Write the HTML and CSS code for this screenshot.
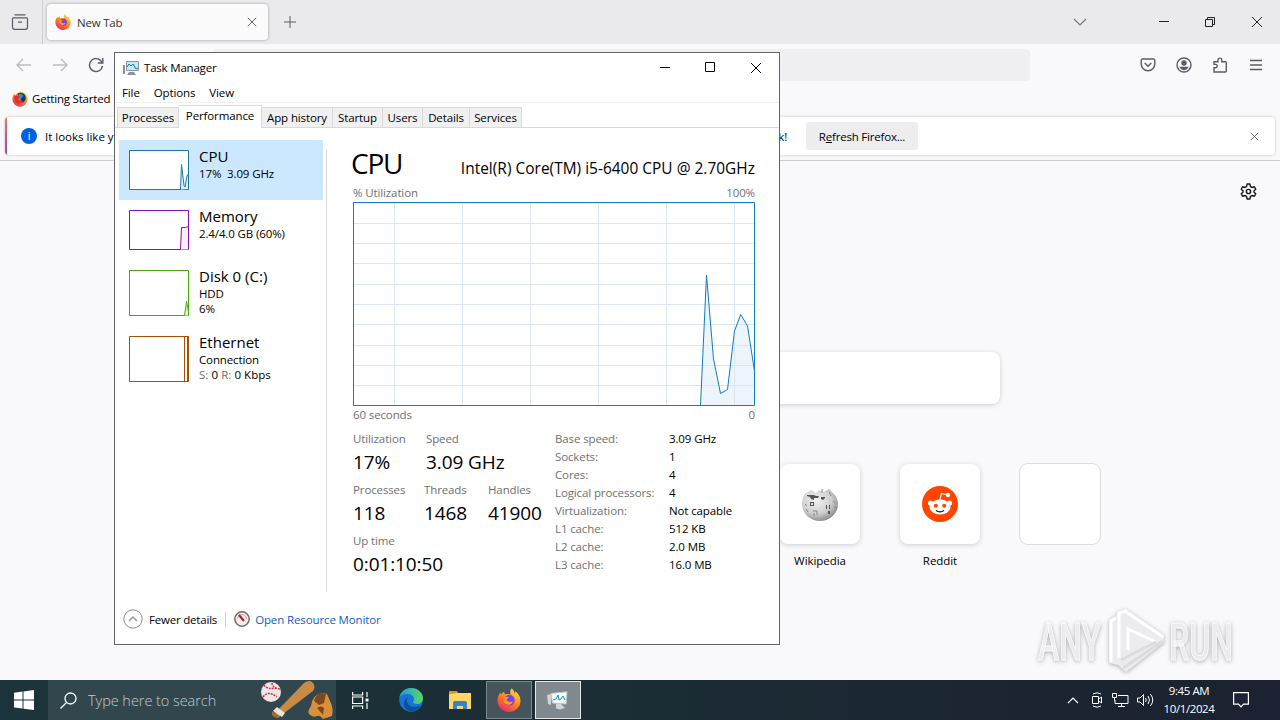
FILE: index.html
```
<!DOCTYPE html>
<html lang="en">

<head>
  <meta charset="UTF-8">
  <meta name="viewport" content="width=device-width, initial-scale=1.0">
  <title>Desktop</title>
  <link rel="stylesheet" href="styles.css">
</head>

<body>
  <!-- shared icons -->
  <svg class="defs" width="0" height="0">
    <defs>
      <linearGradient id="fx" x1=".8" y1="0" x2=".2" y2="1">
        <stop offset="0" stop-color="#ffe23a" />
        <stop offset=".45" stop-color="#ff8a1c" />
        <stop offset="1" stop-color="#f0206a" />
      </linearGradient>
      <linearGradient id="edge" x1="0" y1="0" x2="1" y2="0">
        <stop offset="0" stop-color="#1b9de0" />
        <stop offset="1" stop-color="#5ad860" />
      </linearGradient>
      <radialGradient id="globe" cx=".4" cy=".35" r=".7">
        <stop offset="0" stop-color="#f1f1f1" />
        <stop offset=".6" stop-color="#cfcfcf" />
        <stop offset="1" stop-color="#858585" />
      </radialGradient>
      <symbol id="firefox" viewBox="0 0 24 24">
        <path fill="url(#fx)" d="M14.5.5c2 1.5 2.7 3 3 4.4 1-.2 1-1.2.8-2 3.3 2.7 5.2 6 5.2 9.8A11.5 11.3 0 0 1 .5 12.8C.4 9.2 1.7 6.5 3.5 4.2c0 1 .2 1.6.6 2C5 5 6 4.2 7.3 3.7 7 5 7.6 5.8 8.4 6.2c2-.4 4-.2 5.4.6C12.8 4.5 13 2.2 14.5.5z" />
        <circle cx="12.3" cy="12.2" r="5.4" fill="#7542e5" />
        <path fill="#ff9a20" d="M6.5 9.5c2-1.3 4-1 5.7.4-1.8.2-2.7 1.2-2.7 2.4 1.4 1.7 4.3 1.9 6.3.6-.6 3.2-3.5 4.6-6 3.7-2.7-.9-4-3.9-3.3-7.1z" />
      </symbol>
      <symbol id="firefox-old" viewBox="0 0 24 24">
        <path fill="url(#fx)" d="M12 .8c6 0 11 4.5 11.3 10.5C23.6 18 18 23.5 12 23.5S.6 18.5.6 12.5c0-4 1.4-6.5 2.9-8.3l1 2L7.3 3.7z" />
        <path fill="#17356f" d="M8 4c4-3 10-1.5 12 3 1.5 4 0 9-4.5 10.5z" />
        <path fill="#2d8fd8" d="M10 4.5c3-1 6 .5 7 3l-4 5-4-4z" />
        <path fill="#e0321c" d="M3.5 8l4-1.5 4 2.5-2 3.5q3 4 7.5 2-2.5 5-7.5 4.5C4 18 2.5 13 3.5 8z" />
      </symbol>
      <symbol id="close" viewBox="0 0 12 12">
        <path fill="none" stroke="currentColor" d="M1 1l10 10M11 1L1 11" />
      </symbol>
    </defs>
  </svg>

  <div class="desktop">
    <div class="firefox">
      <div class="tabstrip">
        <div class="view">
          <svg width="18" height="16" viewBox="0 0 18 16" fill="none" stroke="#5b5b66" stroke-width="1.2"><path d="M3.5.8h11M2.5 3.8h13a1 1 0 0 1 1 1v8.5a2 2 0 0 1-2 2h-11a2 2 0 0 1-2-2V4.8a1 1 0 0 1 1-1zM7 8.200h4" /></svg>
        </div>
        <div class="tab">
          <svg class="tab__icon" width="16" height="16"><use href="#firefox" /></svg>
          <span class="tab__title">New Tab</span>
          <svg class="tab__close" width="10" height="10"><use href="#close" /></svg>
        </div>
        <svg class="plus" width="12" height="12" viewBox="0 0 12 12" stroke="#5b5b66"><path d="M6 0v12M0 6h12" /></svg>
        <div class="winbtns">
          <svg class="winbtns__list" width="14" height="8" viewBox="0 0 14 8" fill="none" stroke="#77777f" stroke-width="1.2"><path d="M1 1l6 6 6-6" /></svg>
          <svg width="10" height="10" viewBox="0 0 10 10" stroke="#222"><path d="M0 4.5h10" /></svg>
          <svg width="10" height="10" viewBox="0 0 10 10" fill="none" stroke="#222"><path d="M.5 2.5h7v7h-7zM2.5 2.5v-2h7v7h-2" /></svg>
          <svg width="12" height="12" color="#222"><use href="#close" /></svg>
        </div>
      </div>

      <div class="toolbar">
        <svg class="toolbar__arrow" width="16" height="14" viewBox="0 0 16 14"><path d="M15 7H1M7 1L1 7l6 6" /></svg>
        <svg class="toolbar__arrow" width="16" height="14" viewBox="0 0 16 14"><path d="M1 7h14M9 1l6 6-6 6" /></svg>
        <svg class="toolbar__reload" width="16" height="16" viewBox="0 0 16 16"><path d="M14.2 6.2A6.5 6.5 0 1 0 14.4 9M14.8 1v5h-5" /></svg>
        <div class="urlbar"></div>
        <div class="toolbar__right">
          <svg width="16" height="16" viewBox="0 0 16 16"><path d="M2.5 2h11a1.3 1.3 0 0 1 1.3 1.3V7a6.8 6.8 0 0 1-13.6 0V3.3A1.3 1.3 0 0 1 2.5 2zM4.7 6L8 9.2 11.3 6" /></svg>
          <svg width="16" height="16" viewBox="0 0 16 16"><circle cx="8" cy="8" r="7" /><circle cx="8" cy="6" r="2" fill="#5b5b66" /><path d="M4.5 10.5h7q-1 2-3.5 2t-3.5-2z" fill="#5b5b66" /></svg>
          <svg width="16" height="16" viewBox="0 0 16 16"><path d="M2 15V10.8h1.5a1.7 1.7 0 0 0 0-3.4H2V4.7h4V3a1.9 1.9 0 0 1 3.8 0v1.7h3.7a.8.8 0 0 1 .8.8V14a1 1 0 0 1-.8 1z" /></svg>
          <svg class="toolbar__menu" width="12" height="16" viewBox="0 0 12 16"><path d="M0 3.5h12M0 8h12M0 12.5h12" /></svg>
        </div>
      </div>

      <div class="bookmarks">
        <svg width="16" height="16"><use href="#firefox-old" /></svg>
        <span>Getting Started</span>
      </div>

      <div class="infobar">
        <div class="infobar__i">i</div>
        <span class="infobar__start">It looks like y</span>
        <span class="infobar__end">k!</span>
        <div class="infobar__btn"><span>R<u>e</u>fresh Firefox...</span></div>
        <svg class="infobar__close" width="9" height="9"><use href="#close" /></svg>
      </div>

      <div class="newtab">
        <svg class="gear" width="17" height="17" viewBox="0 0 24 24" fill="none" stroke="#15141a" stroke-width="2"><circle cx="12" cy="12" r="3" /><path stroke-linejoin="round" d="M10 1.5h4l.8 3.5L17 6.3l3.3-1 2 3.5L19.8 11v2l2.5 2.2-2 3.5-3.3-1-2.2 1.3-.8 3.5h-4L9.2 19 7 17.7l-3.3 1-2-3.5L4.2 13v-2L1.7 8.8l2-3.5 3.3 1L9.2 5z" /></svg>
        <div class="search"></div>
        <div class="sites">
          <div class="site">
            <div class="site__tile">
              <svg width="36" height="34" viewBox="0 0 36 34">
                <path fill="url(#globe)" d="M3 7l6-4 5 3 3-3 4 2 6-3 5 5q4 5 4 10a18 17 0 0 1-36 0Q0 11 3 7z" />
                <path fill="#555" d="M5 8h7l2 1h3l-1 2h-4v2l-3-1-1-2-3-1zM8 15h4v4H8zm1 1v2h2v-2zM24 18h1v4h-1zm3 0h1v4h-1zM26 24h2v3h-2zM19 10h4v1l-2 2-2-1z" />
                <path fill="none" stroke="#888" d="M11 24h4v4M12 26v3M31 14l2 2M32 20l3 1M27 5l2 4M3 17l2 2M4 22l2 3M20 2v4" />
              </svg>
            </div>
            <span class="site__name">Wikipedia</span>
          </div>
          <div class="site">
            <div class="site__tile">
              <svg width="36" height="36" viewBox="0 0 36 36">
                <circle cx="18" cy="18" r="18" fill="#ff4500" />
                <path d="M18 14l1.3-6.5 5 1" fill="none" stroke="#fff" stroke-width="1.2" />
                <g fill="#fff"><circle cx="26" cy="9" r="2.2" /><circle cx="8.5" cy="17" r="2.6" /><circle cx="27.5" cy="17" r="2.6" /><ellipse cx="18" cy="21" rx="10.5" ry="7.5" /></g>
                <circle cx="13.8" cy="19.8" r="2" fill="#ff4500" /><circle cx="22.2" cy="19.8" r="2" fill="#ff4500" />
                <path d="M14 24.5q4 2.6 8 0" fill="none" stroke="#111" stroke-width="1.2" />
              </svg>
            </div>
            <span class="site__name">Reddit</span>
          </div>
          <div class="site">
            <div class="site__tile site__tile--empty"></div>
          </div>
        </div>
      </div>
    </div>

    <div class="watermark">
      <svg width="240" height="76" viewBox="0 0 240 76">
        <g class="watermark__text">
          <text x="8" y="56" textLength="63" lengthAdjust="spacingAndGlyphs">ANY</text>
          <text x="139" y="56" textLength="64" lengthAdjust="spacingAndGlyphs">RUN</text>
        </g>
        <path class="watermark__edge" d="M79 16l8-5V9l9-4 38 26v7L96 68l-8-7-9-2z" />
        <path class="watermark__line" d="M81 58V17l5-3M89 54V9l6-2 38 26M98 46V25l28 13" />
        <path class="watermark__line watermark__line--dim" d="M93 64l40-27M91 56l35-18" />
      </svg>
    </div>

    <div class="taskmgr">
      <div class="title">
        <svg width="16" height="15" viewBox="0 0 16 15"><path fill="#8a9299" d="M0 5h2v9H0zM6 12h5l2 3H4z" /><path fill="#c9e9f6" stroke="#8798a3" d="M3.5 1.5h12v9h-12z" /><path fill="none" stroke="#1673a6" d="M4 7l2-3 2 2 2-2 3 5 2-1" /></svg>
        <span class="title__text">Task Manager</span>
        <div class="title__btns">
          <svg width="11" height="11" viewBox="0 0 11 11" stroke="#000"><path d="M0 5.5h10" /></svg>
          <svg width="11" height="11" viewBox="0 0 11 11" fill="none" stroke="#000"><path d="M.5.5h9v9H.5z" /></svg>
          <svg width="12" height="12" color="#000"><use href="#close" /></svg>
        </div>
      </div>
      <div class="menu">
        <span>File</span>
        <span>Options</span>
        <span>View</span>
      </div>
      <div class="tabs">
        <div class="tabs__item tabs__item--1">Processes</div>
        <div class="tabs__item tabs__item--active">Performance</div>
        <div class="tabs__item tabs__item--3">App history</div>
        <div class="tabs__item tabs__item--4">Startup</div>
        <div class="tabs__item tabs__item--5">Users</div>
        <div class="tabs__item tabs__item--6">Details</div>
        <div class="tabs__item tabs__item--7">Services</div>
      </div>

      <div class="body">
        <div class="side">
          <div class="res res--active">
            <svg width="60" height="40" viewBox="0 0 60 40" fill="#fff" stroke="#1a7aa6"><path d="M.5.5h59v39H.5z" /><path fill="#e3eff7" d="M51.5 39.5l1-25 2.5 21 1 1.5 2-11 1.5-2.5V39" /></svg>
            <div class="res__text">
              <p class="res__name">CPU</p>
              <p>17%&nbsp; 3.09 GHz</p>
            </div>
          </div>
          <div class="res">
            <svg width="60" height="40" viewBox="0 0 60 40" fill="#fff" stroke="#8b12ae"><path d="M.5.5h59v39H.5z" /><path fill="#f6f0fa" d="M51.5 39.5l1-22h4l3-1v23" /></svg>
            <div class="res__text">
              <p class="res__name">Memory</p>
              <p>2.4/4.0 GB (60%)</p>
            </div>
          </div>
          <div class="res res--tall">
            <svg width="60" height="46" viewBox="0 0 60 46" fill="#fff" stroke="#4da60c"><path d="M.5.5h59v45H.5z" /><path fill="#e2f2d6" d="M55.5 45.5l2-14 2 10v4" /></svg>
            <div class="res__text">
              <p class="res__name">Disk 0 (C:)</p>
              <p>HDD</p>
              <p>6%</p>
            </div>
          </div>
          <div class="res res--tall">
            <svg width="60" height="46" viewBox="0 0 60 46" fill="#fff" stroke="#a74f01"><path d="M.5.5h59v45H.5z" /><path fill="#fbe9dc" d="M55.5 0v46M58.5 0v46" /></svg>
            <div class="res__text">
              <p class="res__name">Ethernet</p>
              <p>Connection</p>
              <p class="res__net"><i>S:</i> 0 <i>R:</i> 0 Kbps</p>
            </div>
          </div>
        </div>

        <div class="main">
          <div class="head">
            <h1 class="head__title">CPU</h1>
            <span class="head__model">Intel(R) Core(TM) i5-6400 CPU @ 2.70GHz</span>
          </div>
          <div class="axis">
            <span>% Utilization</span>
            <span>100%</span>
          </div>
          <svg class="chart" width="402" height="204" viewBox="0 0 402 204">
            <path class="chart__area" d="M347.5 203.5l6-130.5 7 84 7 34.5 7-4 7-58.5 6.2-16.5 6.8 11.5 7 45v34.5z" />
            <path class="chart__grid" d="M41.5 1v202M109.5 1v202M177.5 1v202M245.5 1v202M313.5 1v202M381.5 1v202M1 21.5h400M1 41.5h400M1 61.5h400M1 82.5h400M1 102.5h400M1 122.5h400M1 143.5h400M1 163.5h400M1 183.5h400" />
            <path class="chart__line" d="M347.5 203.5l6-130.5 7 84 7 34.5 7-4 7-58.5 6.2-16.5 6.8 11.5 7 45" />
            <path class="chart__line" d="M.5.5h401v203H.5z" />
          </svg>
          <div class="axis axis--bottom">
            <span>60 seconds</span>
            <span>0</span>
          </div>

          <div class="stats">
            <div class="stats__left">
              <div class="stats__row">
                <div class="stat stat--a"><p>Utilization</p><b>17%</b></div>
                <div class="stat"><p>Speed</p><b>3.09 GHz</b></div>
              </div>
              <div class="stats__row">
                <div class="stat stat--b"><p>Processes</p><b>118</b></div>
                <div class="stat stat--c"><p>Threads</p><b>1468</b></div>
                <div class="stat"><p>Handles</p><b>41900</b></div>
              </div>
              <div class="stats__row">
                <div class="stat"><p>Up time</p><b>0:01:10:50</b></div>
              </div>
            </div>
            <dl class="info">
              <dt>Base speed:</dt><dd>3.09 GHz</dd>
              <dt>Sockets:</dt><dd>1</dd>
              <dt>Cores:</dt><dd>4</dd>
              <dt>Logical processors:</dt><dd>4</dd>
              <dt>Virtualization:</dt><dd>Not capable</dd>
              <dt>L1 cache:</dt><dd>512 KB</dd>
              <dt>L2 cache:</dt><dd>2.0 MB</dd>
              <dt>L3 cache:</dt><dd>16.0 MB</dd>
            </dl>
          </div>
        </div>
      </div>

      <div class="foot">
        <svg width="20" height="20" viewBox="0 0 20 20" fill="none" stroke="#8a8a8a"><circle cx="10" cy="10" r="9.2" /><path stroke-width="1.5" stroke="#999" d="M6 12l4-4 4 4" /></svg>
        <span class="foot__less">Fewer details</span>
        <svg class="foot__gauge" width="16" height="16" viewBox="0 0 16 16"><circle cx="8" cy="8" r="7.2" fill="#f6eeea" stroke="#6d6f68" stroke-width="1.5" /><path d="M3.5 8a4.5 4.5 0 0 1 9 0" fill="none" stroke="#c9a9a0" /><path d="M5 4l5 6" stroke="#b01818" stroke-width="2" /></svg>
        <span class="foot__link">Open Resource Monitor</span>
      </div>
    </div>

    <div class="taskbar">
      <div class="start">
        <svg width="20" height="20" viewBox="0 0 20 20" fill="#fff"><path d="M0 2.8L8.500 1.6v8H0zM9.5 1.5L20 0v9.6H9.5zM0 10.6h8.5v8L0 17.4zM9.5 10.6H20V20L9.5 18.7z" /></svg>
      </div>
      <div class="find">
        <svg width="17" height="17" viewBox="0 0 17 17" fill="none" stroke="#fff" stroke-width="1.3"><circle cx="10.5" cy="6.5" r="5.5" /><path d="M6.5 10.5L.5 16.5" /></svg>
        <span class="find__text">Type here to search</span>
        <svg class="find__art" width="74" height="40" viewBox="0 0 74 40">
          <circle cx="11" cy="12" r="10" fill="#eee5e8" />
          <path d="M4 5q3 5 13 3M3 17q5-7 14 0M12 3q0 5 8 6" fill="none" stroke="#c2334a" stroke-width="1.5" stroke-dasharray="2 1" />
          <path d="M15 33L44 3q6-4 9 0t0 8L19 37q-6 0-4-4z" fill="#c98a45" />
          <path d="M17 27l8 6-3 4-9-6z" fill="#e9e4df" /><path d="M13 31q-3 3 1 6 4 2 6 0z" fill="#a5682f" />
          <path d="M49 34q-2-2 2-8 1-11 11-13l5 1 3 7q4 8 2 15l-9 3q-3-4-6-3-4 2-8-2z" fill="#d8903c" />
          <path d="M54 21q2-7 7-8l5 1-2 9-5 2zM57 28q4-3 7 0l-1 7q-3-4-6-7z" fill="#7d481c" />
        </svg>
      </div>
      <div class="apps">
        <div class="app">
          <svg width="17" height="17" viewBox="0 0 17 17" fill="none" stroke="#fff" stroke-width="1.2"><path d="M.6 0v3h10V0M.6 5h10v6.5H.6zM.6 17v-3h10v3M15 0v5M15 11v6" /><path d="M13.5 6.5h3v3h-3z" fill="#fff" stroke="none" /></svg>
        </div>
        <div class="app app--edge">
          <svg width="24" height="24" viewBox="0 0 24 24"><circle cx="12" cy="12" r="11.8" fill="#1673cf" /><path fill="url(#edge)" d="M.3 10C1 4 6 0 12 0c7 0 12 5 12 10 0 4-3 6-6 6s-4-1-4-2c0-.7 1-1 1-3 0-3-3-5-7-5-4 0-7 2-7.7 4z" /><path fill="#0c4f9b" d="M9 9c-3 4 0 10 6 10 3 0 5-1 7-2-3 5-8 7-12 6-6-2-7-11-1-14z" /></svg>
        </div>
        <div class="app">
          <svg width="22" height="20" viewBox="0 0 22 20"><path fill="#d9931a" d="M0 1h8l2 3H0z" /><path fill="#ffd766" d="M0 4l9-1h13v16H0z" /><path fill="#2f86cf" d="M4 19v-6q0-2 2-2h10q2 0 2 2v6h-4v-3H8v3z" /></svg>
        </div>
        <div class="app app--open">
          <svg width="24" height="24"><use href="#firefox" /></svg>
        </div>
        <div class="app app--open app--active">
          <svg width="22" height="19" viewBox="0 0 22 19"><path fill="#d0d3d4" d="M0 4l4-1v11l-3-1zM9 13h5l4 4-5 1.5-4-1z" /><path fill="#f4fafd" stroke="#c3cacd" d="M4 2.5l16-1.7L19 13 5.5 12z" /><path fill="none" stroke="#1d86be" d="M6 9l3-1 2-4 1 5 2-1 2-3 2 4" /></svg>
        </div>
      </div>
      <div class="tray">
        <svg width="12" height="7" viewBox="0 0 12 7" fill="none" stroke="#fff" stroke-width="1.2"><path d="M1 6l5-5 5 5" /></svg>
        <svg width="12" height="16" viewBox="0 0 12 16" fill="none" stroke="#fff"><path d="M1.5 4.5h6v7h-6zM7.5 7l3-2v6l-3-2M2 2q4-2.5 8 0M2 14q4 2.5 8 0" /></svg>
        <svg width="17" height="14" viewBox="0 0 17 14" fill="none" stroke="#fff"><path d="M6 2.5h10v8H3V7M.5.5h4v4h-4zM2.5 4.5v3M9.5 10.5v3M6 13.5h7" /></svg>
        <svg width="17" height="14" viewBox="0 0 17 14" fill="none" stroke="#fff"><path d="M.5 5h2.5l3.5-3.5v11L3 9H.5zM8.5 5q1.5 2 0 4M11 3q3 4 0 8M13.5 1.2q4.5 5.8 0 11.6" /></svg>
      </div>
      <div class="clock">
        <span>9:45 AM</span>
        <span>10/1/2024</span>
      </div>
      <svg class="note" width="16" height="16" viewBox="0 0 16 16" fill="none" stroke="#fff" stroke-width="1.2"><path d="M.6.6h14.8v11.5H10.5L8 14.8 5.5 12.1H.6z" /></svg>
    </div>
  </div>
</body>

</html>
```
FILE: styles.css
```
* {
  box-sizing: border-box;
}

body {
  margin: 0;
  font-family: "Open Sans", "Noto Sans", sans-serif;
  font-size: 11.5px;
  color: #000;
}

p, h1, dl, dd {
  margin: 0;
  font-weight: normal;
}

svg {
  display: block;
  flex: none;
}

span {
  white-space: nowrap;
}

.defs {
  position: absolute;
}

.desktop {
  position: relative;
  width: 1280px;
  height: 720px;
  overflow: hidden;
  background: #f9f9fb;
}

/* firefox */
.firefox {
  height: 680px;
  letter-spacing: -0.2px;
}

.tabstrip {
  display: flex;
  align-items: center;
  height: 44px;
  background: #eaeaed;
}

.view {
  display: flex;
  align-items: center;
  width: 43px;
  height: 44px;
  padding-left: 11px;
  border-right: 1px solid #cdcdd3;
}

.tab {
  display: flex;
  align-items: center;
  width: 221px;
  height: 36px;
  margin-left: 4px;
  padding: 0 11px 0 8px;
  border-radius: 4px;
  background: #fbfbfc;
  box-shadow: 0 0 3px rgba(0, 0, 0, .35);
}

.tab__title {
  flex: 1;
  margin-left: 6px;
  color: #333;
}

.tab__close {
  color: #444;
}

.plus {
  margin-left: 16px;
}

.winbtns {
  display: flex;
  align-items: center;
  gap: 36px;
  margin-left: auto;
  padding-right: 17px;
}

.winbtns__list {
  margin-right: 36px;
}

.toolbar {
  display: flex;
  align-items: center;
  height: 41px;
  padding: 0 18px 0 16px;
}

.toolbar svg {
  fill: none;
  stroke: #5b5b66;
  stroke-width: 1.4;
}

.toolbar .toolbar__arrow {
  margin-right: 20px;
  stroke: #bbbbc2;
}

.urlbar {
  width: 817px;
  height: 32px;
  margin-left: 109px;
  border-radius: 4px;
  background: #f0f0f4;
}

.toolbar__right {
  display: flex;
  gap: 20px;
  margin-left: auto;
}

.toolbar__menu {
  margin-left: 2px;
}

.bookmarks {
  display: flex;
  align-items: center;
  gap: 4px;
  height: 29px;
  padding: 0 0 2px 12px;
}

.infobar {
  display: flex;
  align-items: center;
  height: 38px;
  margin: 3px 5px 5px;
  padding: 0 16px;
  border-radius: 4px;
  background: linear-gradient(#e8804a, #d0529a, #8a50d8) 0 0 / 2px 100% no-repeat #fff;
  box-shadow: 0 0 3px rgba(0, 0, 0, .2);
}

.infobar__i {
  width: 16px;
  height: 16px;
  border-radius: 8px;
  background: #0061e0;
  color: #fff;
  font-size: 11px;
  line-height: 15px;
  text-align: center;
}

.infobar__start {
  width: 80px;
  margin-left: 8px;
  letter-spacing: 0;
}

.infobar__end {
  width: 657px;
  margin-left: 5px;
  text-align: right;
}

.infobar__btn {
  width: 112px;
  height: 28px;
  margin-left: 19px;
  border-radius: 4px;
  background: #ededf0;
  line-height: 29px;
  text-align: center;
}

.infobar__close {
  margin-left: auto;
  color: #444;
}

.newtab {
  display: flex;
  flex-direction: column;
  height: 520px;
  border-top: 1px solid #ccccd2;
}

.gear {
  align-self: flex-end;
  margin: 22px 23px 0 0;
}

.search {
  width: 720px;
  height: 52px;
  margin: 152px 0 0 280px;
  border-radius: 8px;
  background: #fff;
  box-shadow: 0 1px 5px rgba(58, 57, 68, .22);
}

.sites {
  display: flex;
  gap: 40px;
  margin: 60px 0 0 780px;
}

.site {
  width: 80px;
  text-align: center;
}

.site__tile {
  display: flex;
  align-items: center;
  justify-content: center;
  height: 80px;
  border-radius: 8px;
  background: #fff;
  box-shadow: 0 1px 5px rgba(58, 57, 68, .22);
}

.site__tile--empty {
  box-shadow: 0 0 0 1px #dcdce0;
}

.site__name {
  display: block;
  margin-top: 8px;
  line-height: 17px;
  letter-spacing: -0.05px;
}

/* watermark */
.watermark {
  position: absolute;
  left: 1030px;
  top: 604px;
  filter: drop-shadow(0 1px 2px rgba(0, 0, 0, .3));
}

.watermark svg {
  overflow: visible;
}

.watermark__text {
  fill: #ececee;
  stroke: #fbfbfc;
  font-family: Roboto, sans-serif;
  font-size: 51px;
  font-weight: 500;
  letter-spacing: 0;
}

.watermark__edge {
  fill: #ececee;
}

.watermark__line {
  fill: none;
  stroke: #fff;
  stroke-width: 3;
}

.watermark__line--dim {
  stroke: #dcdcde;
}

/* task manager window */
.taskmgr {
  position: absolute;
  left: 114px;
  top: 52px;
  display: flex;
  flex-direction: column;
  width: 666px;
  height: 593px;
  border: 1px solid #646464;
  background: #fff;
  letter-spacing: -0.12px;
}

.title {
  display: flex;
  align-items: center;
  height: 29px;
  padding-left: 8px;
}

.title__text {
  margin-left: 5px;
  letter-spacing: -0.2px;
}

.title__btns {
  display: flex;
  align-items: center;
  gap: 34px;
  margin: 0 17px 0 auto;
}

.menu {
  display: flex;
  gap: 14px;
  height: 21px;
  padding-left: 7px;
  border-bottom: 1px solid #f0f0f0;
  line-height: 21px;
}

.tabs {
  display: flex;
  flex: none;
  align-items: flex-end;
  height: 25px;
  padding-left: 2px;
  box-shadow: inset 0 -1px #d9d9d9;
}

.tabs__item {
  height: 21px;
  border: 1px solid #d9d9d9;
  border-left: 0;
  background: #f0f0f0;
  line-height: 20px;
  text-align: center;
  white-space: nowrap;
}

.tabs__item--1 {
  width: 62px;
  border-left: 1px solid #d9d9d9;
}

.tabs__item--active {
  width: 83px;
  height: 23px;
  border-bottom: 0;
  background: #fff;
}

.tabs__item--3 {
  width: 71px;
}

.tabs__item--4 {
  width: 50px;
}

.tabs__item--5 {
  width: 40px;
}

.tabs__item--6 {
  width: 47px;
}

.tabs__item--7 {
  width: 52px;
}

.body {
  display: flex;
  flex: none;
  height: 464px;
  padding: 12px 24px 0 4px;
}

.side {
  width: 208px;
  height: 452px;
  background: linear-gradient(#d9d9d9, #d9d9d9) 207px 10px / 1px 442px no-repeat;
}

.res {
  display: flex;
  width: 204px;
  height: 60px;
  padding: 10px;
}

.res--active {
  background: #cce8ff;
}

.res--tall {
  height: 66px;
}

.res__text {
  margin: -4px 0 0 10px;
  line-height: 15px;
  white-space: nowrap;
}

.res__name {
  font-size: 15px;
  line-height: 20px;
  letter-spacing: 0;
}

.res__net {
  letter-spacing: 0.05px;
}

.res i {
  color: #707070;
  font-style: normal;
}

.main {
  width: 402px;
  margin-left: 26px;
}

.head {
  display: flex;
  align-items: baseline;
  justify-content: space-between;
  height: 45px;
}

.head__title {
  margin-left: -2px;
  font-size: 28px;
  line-height: 46px;
  letter-spacing: -1.2px;
}

.head__model {
  font-size: 15.4px;
  letter-spacing: 0.04px;
}

.axis {
  display: flex;
  justify-content: space-between;
  height: 17px;
  color: #707070;
  line-height: 15px;
}

.axis--bottom {
  height: 25px;
  line-height: 18px;
}

.chart__area {
  fill: #edf4fb;
}

.chart__grid {
  fill: none;
  stroke: #d9e7f0;
}

.chart__line {
  fill: none;
  stroke: #117dbb;
}

.stats {
  display: flex;
}

.stats__left {
  width: 202px;
}

.stats__row {
  display: flex;
  height: 51px;
}

.stat p {
  color: #707070;
  line-height: 15px;
}

.stat b {
  font-size: 19px;
  font-weight: normal;
  line-height: 32px;
  letter-spacing: -0.1px;
  white-space: nowrap;
}

.stat--a {
  width: 73px;
}

.stat--b {
  width: 71px;
}

.stat--c {
  width: 64px;
}

.info {
  display: grid;
  grid-template-columns: 114px 86px;
  grid-auto-rows: 18px;
  line-height: 15px;
  white-space: nowrap;
}

.info dt {
  color: #707070;
}

.foot {
  display: flex;
  align-items: center;
  height: 52px;
  padding: 2px 0 0 8px;
}

.foot__less {
  margin-left: 6px;
  padding-right: 8px;
  border-right: 1px solid #d0d0d0;
  letter-spacing: -0.2px;
}

.foot__gauge {
  margin-left: 8px;
}

.foot__link {
  margin-left: 5px;
  color: #1060bf;
}

/* taskbar */
.taskbar {
  display: flex;
  align-items: center;
  height: 40px;
  background: linear-gradient(90deg, #1c343b, #1b2c35 50%, #1b2130);
  color: #fff;
}

.start {
  width: 48px;
  padding-left: 14px;
}

.find {
  display: flex;
  align-items: center;
  width: 288px;
  height: 40px;
  padding-left: 12px;
  background: #31464d;
}

.find__text {
  margin-left: 11px;
  color: #c3cbce;
  font-size: 14.5px;
  font-weight: 300;
  letter-spacing: -0.05px;
}

.find__art {
  margin: 0 2px 0 auto;
}

.apps {
  display: flex;
  gap: 2px;
}

.app {
  display: flex;
  align-items: center;
  justify-content: center;
  width: 48px;
  height: 40px;
}

.app--edge {
  padding-left: 2px;
}

.app--open {
  width: 46px;
  height: 38px;
  margin-top: 1px;
  border: 1px solid #7c888d;
  background: #46555b;
}

.app--active {
  margin-left: 1px;
  border-color: #e6e9ea;
  background: #80898d;
}

.tray {
  display: flex;
  align-items: center;
  gap: 9px;
  margin-left: auto;
}

.tray svg:first-child {
  margin-right: 3px;
}

.tray svg:last-child {
  margin-left: -1px;
}

.clock {
  display: flex;
  flex-direction: column;
  width: 60px;
  margin-left: 5px;
  line-height: 18px;
  text-align: center;
  letter-spacing: -0.4px;
}

.note {
  margin: 0 31px 0 14px;
}
```
